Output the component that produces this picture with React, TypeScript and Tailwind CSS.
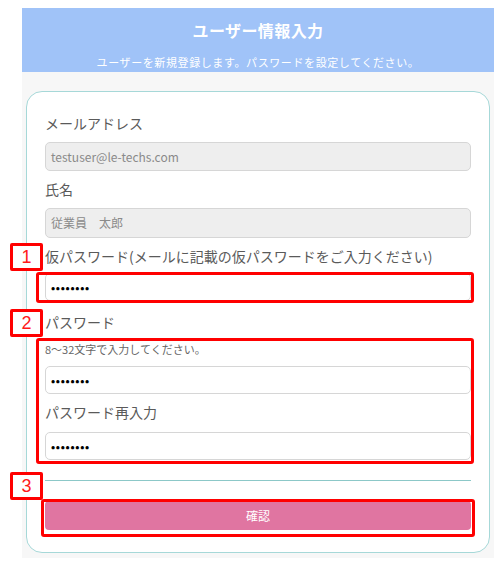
import React from "react";

const FONT = { fontFamily: '"Noto Sans CJK JP", "Noto Sans", sans-serif' };

function Label({ children, className = "" }: { children: React.ReactNode; className?: string }) {
  return <div className={`text-[14px] leading-[20px] text-[#5a5a5a] ${className}`}>{children}</div>;
}

function Field({ value, disabled, className = "" }: { value: string; disabled?: boolean; className?: string }) {
  return (
    <div
      className={`flex h-[28px] items-center rounded-[5px] border border-[#d6d6d6] px-[5px] ${
        disabled ? "bg-[#eeeeee] text-[12px] text-[#8a8a8a]" : "bg-white text-[11px] font-bold tracking-[0.7px] text-black"
      } ${className}`}
    >
      {value}
    </div>
  );
}

function NumberTag({ n, top }: { n: number; top: string }) {
  return (
    <div
      className={`absolute left-[10px] ${top} flex h-[28px] w-[33px] items-center justify-center rounded-[2px] border-[3px] border-[#ff0000] bg-white text-[18px] leading-none text-[#ff1a1a]`}
      style={{ fontFamily: '"Liberation Sans", sans-serif' }}
    >
      {n}
    </div>
  );
}

export default function App() {
  const dots = "••••••••";
  return (
    <div className="relative h-[561px] w-[500px] bg-white" style={FONT}>
      <div className="ml-[22px] w-[472px] pt-[8px]">
        <header className="flex h-[64px] flex-col items-center bg-[#a0c3f8] text-white">
          <div className="mt-[10px] text-[16px] font-bold leading-[24px] tracking-[0.4px]">ユーザー情報入力</div>
          <div className="mt-[12px] text-[11px] leading-[16px] tracking-[0.6px]">
            ユーザーを新規登録します。パスワードを設定してください。
          </div>
        </header>
        <div className="bg-[#f7f7f7] px-[4px] pb-[5px] pt-[19px]">
          <div className="flex flex-col rounded-[16px] border-[1.5px] border-[#a6d8d8] bg-white px-[18px] pb-[22px] pt-[21px]">
            <Label>メールアドレス</Label>
            <Field className="mt-[9px] h-[29px]" value="testuser@le-techs.com" disabled />
            <Label className="mt-[8px]">氏名</Label>
            <Field className="mt-[9px] h-[30px]" value="従業員　太郎" disabled />
            <Label className="mt-[8px]">仮パスワード(メールに記載の仮パスワードをご入力ください)</Label>
            <Field className="mt-[7px]" value={dots} />
            <Label className="mt-[11px]">パスワード</Label>
            <div className="mt-[9px] text-[11px] leading-[16px] text-[#666]">8〜32文字で入力してください。</div>
            <Field className="mt-[9px]" value={dots} />
            <Label className="mt-[8px]">パスワード再入力</Label>
            <Field className="mt-[10px]" value={dots} />
            <hr className="mt-[20px] border-0 border-t border-[#8cc8c8]" />
            <button className="mt-[20px] flex h-[29px] w-full items-center justify-center rounded-[4px] bg-[#e075a1] text-[12px] text-white">
              確認
            </button>
          </div>
        </div>
      </div>

      {/* annotation overlays */}
      <NumberTag n={1} top="top-[243px]" />
      <NumberTag n={2} top="top-[309px]" />
      <NumberTag n={3} top="top-[472px]" />
      <div className="absolute left-[36px] top-[272px] h-[31px] w-[438px] rounded-[3px] border-[3px] border-[#ff0000]" />
      <div className="absolute left-[36px] top-[338px] h-[126px] w-[438px] rounded-[3px] border-[3px] border-[#ff0000]" />
      <div className="absolute left-[41px] top-[499px] h-[38px] w-[434px] rounded-[3px] border-[3px] border-[#ff0000]" />
    </div>
  );
}
